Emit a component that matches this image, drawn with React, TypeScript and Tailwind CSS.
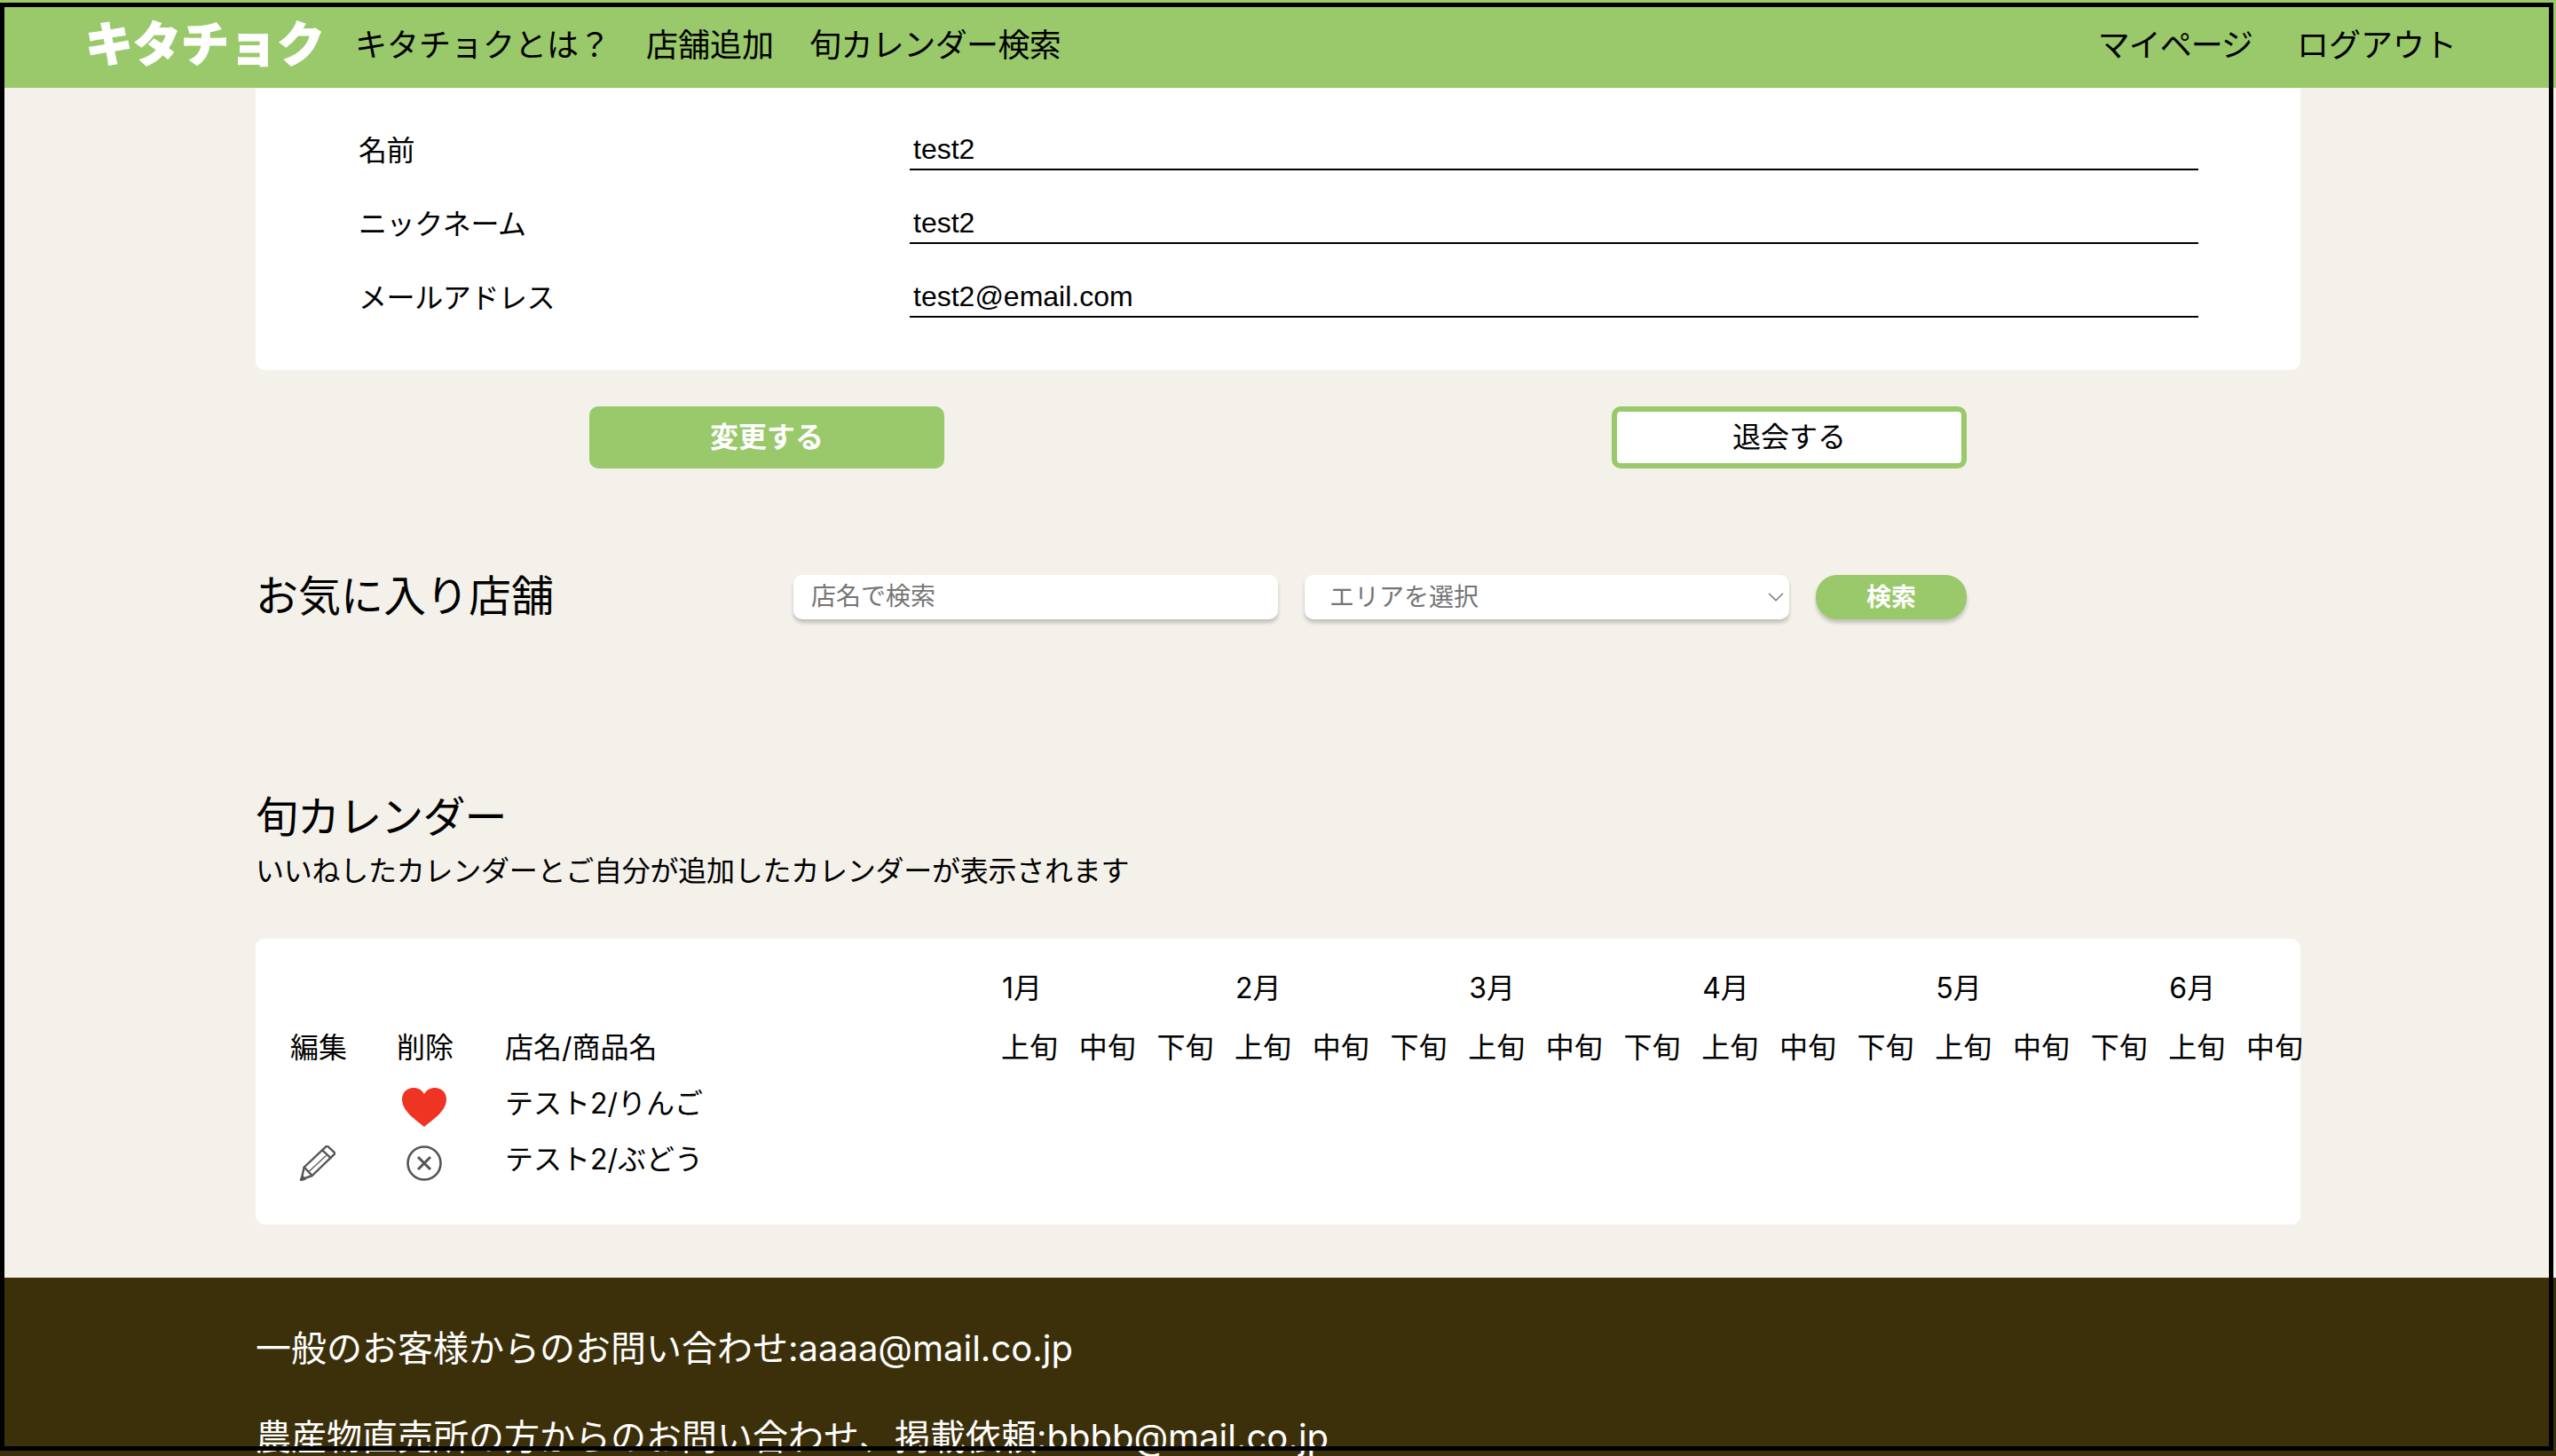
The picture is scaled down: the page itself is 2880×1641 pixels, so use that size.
import { ChevronDown } from "lucide-react";

const FONT = "font-['Inter','Noto_Sans_CJK_JP',sans-serif]";
const months = ["1月", "2月", "3月", "4月", "5月", "6月"];
const terms = ["上旬", "中旬", "下旬"];
// the 6月 下旬 column falls past the right edge of the card
const termCells = months.flatMap((m) => terms.map((t) => m + t)).slice(0, 17);

function Field({ label, value }: { label: string; value: string }) {
  return (
    <div className="flex h-[83px] items-end">
      <label className="w-[621px] leading-[44px] tracking-[-0.4px]">{label}</label>
      <input
        readOnly
        value={value}
        className="h-[48px] w-[1452px] border-b-2 border-black px-1 pt-[1px] font-['Liberation_Sans',sans-serif] text-black outline-none"
      />
    </div>
  );
}

function PencilIcon() {
  return (
    <svg viewBox="0 0 40 40" className="h-10 w-10" fill="none" stroke="#555" strokeWidth="2.4" strokeLinejoin="round" strokeLinecap="round">
      <path d="M29.5 1.2a1.5 1.500 0 0 1 2 0l7.200 6.600a1.500 1.500 0 0 1 0 2.100L13.700 34 1.600 38.400 4.700 24.500z" />
      <path d="M25 5.200l9.600 9" />
      <path d="M4.700 24.500l9 9.500" />
      <path d="M10.500 29l18.700-17.300" strokeWidth="1.2" />
      <path d="M1 39l4.500-1.200-3-3z" fill="#555" />
    </svg>
  );
}

function RemoveIcon() {
  return (
    <svg viewBox="0 0 40 40" className="h-10 w-10" fill="none" stroke="#555" strokeWidth="2.6">
      <circle cx="20" cy="20" r="18.500" />
      <path d="M13 13l14 14M27 13L13 27" strokeWidth="3" />
    </svg>
  );
}

function HeartIcon() {
  return (
    <svg viewBox="0 0 50 44" className="h-[44px] w-[50px]" fill="#ef3424">
      <path d="M25 44C17 37 0 27 0 13 0 5 6 0 13 0c5 0 9.500 2.500 12 7 2.500-4.500 7-7 12-7 7 0 13 5 13 13 0 14-17 24-25 31z" />
    </svg>
  );
}

function CalendarTable() {
  return (
    <div className="mt-[52px] h-[322px] rounded-[10px] bg-white">
      <div className="grid grid-cols-[120px_122px_559px_repeat(18,87.7px)] pl-[39px] pt-[23px]">
        <div className="col-span-3 h-[66px]" />
        {months.map((m) => (
          <div key={m} className="col-span-3 h-[66px] pl-[1px] leading-[66px]">{m}</div>
        ))}
        <div className="h-[67px] leading-[67px]">編集</div>
        <div className="h-[67px] leading-[67px]">削除</div>
        <div className="h-[67px] leading-[67px]">店名/商品名</div>
        {termCells.map((key) => (
          <div key={key} className="h-[67px] whitespace-nowrap leading-[67px]">{key.slice(2)}</div>
        ))}
        <div className="col-start-1 h-[60px]" />
        <div className="flex h-[60px] items-center pl-[6px] pt-[8px]"><HeartIcon /></div>
        <div className="col-span-2 h-[60px] leading-[60px]">テスト2/りんご</div>
        <div className="col-start-1 flex h-[66px] items-center pl-[11px] pt-[8px]"><PencilIcon /></div>
        <div className="flex h-[66px] items-center pl-[11px] pt-[8px]"><RemoveIcon /></div>
        <div className="col-span-2 h-[66px] leading-[66px]">テスト2/ぶどう</div>
      </div>
    </div>
  );
}

export default function App() {
  return (
    <div className={`relative h-screen overflow-hidden bg-[#f4f1ea] text-[32px] text-black ${FONT}`}>
      <header className="flex h-[99px] items-center justify-between bg-[#99c96a] pl-[96px] pr-[112px] pt-[2px] text-[36px]">
        <nav className="flex items-center">
          <a className="mr-[34px] text-[54px] font-black leading-none text-white [-webkit-text-stroke:1px_white]">キタチョク</a>
          <div className="flex gap-[40px]">
            <a>キタチョクとは？</a>
            <a>店舗追加</a>
            <a className="tracking-[-0.6px]">旬カレンダー検索</a>
          </div>
        </nav>
        <nav className="flex gap-[50px]">
          <a className="tracking-[-1px]">マイページ</a>
          <a>ログアウト</a>
        </nav>
      </header>

      <main className="mx-auto w-[2304px]">
        <section className="h-[318px] rounded-b-[10px] bg-white pl-[116px] pt-[10px]">
          <Field label="名前" value="test2" />
          <Field label="ニックネーム" value="test2" />
          <Field label="メールアドレス" value="test2@email.com" />
        </section>

        <div className="ml-[376px] mt-[41px] flex w-[1552px] justify-between">
          <button className="h-[70px] w-[400px] rounded-[10px] bg-[#99c96a] font-bold text-white">変更する</button>
          <button className="h-[70px] w-[400px] rounded-[10px] border-[6px] border-[#99c96a] bg-white">退会する</button>
        </div>

        <div className="mt-[120px] flex h-[50px] items-center">
          <h2 className="w-[606px] pb-[2px] text-[48px] leading-none">お気に入り店舗</h2>
          <input
            placeholder="店名で検索"
            className="h-[50px] w-[546px] rounded-[10px] bg-white px-5 pb-[2px] text-[28px] shadow-[0_4px_4px_rgba(0,0,0,0.2)] outline-none placeholder:text-[#757575]"
          />
          <div className="relative ml-[30px] h-[50px] w-[546px] rounded-[10px] bg-white pl-7 text-[28px] leading-[50px] text-[#757575] shadow-[0_4px_4px_rgba(0,0,0,0.2)]">
            エリアを選択
            <ChevronDown className="absolute right-0 top-[10px] h-[30px] w-[30px] text-[#777777]" strokeWidth={1.2} />
          </div>
          <button className="ml-[30px] h-[50px] w-[170px] rounded-[24px] bg-[#99c96a] text-[28px] font-bold text-white shadow-[0_4px_4px_rgba(0,0,0,0.2)]">検索</button>
        </div>

        <h2 className="mt-[187px] text-[48px] leading-[72px] tracking-[-0.9px]">旬カレンダー</h2>
        <p className="mt-[1px] leading-[48px] tracking-[-0.25px]">いいねしたカレンダーとご自分が追加したカレンダーが表示されます</p>

        <CalendarTable />
      </main>

      <footer className="mt-[60px] h-[400px] bg-[#3c300a] pt-[50px] text-[40px] text-white">
        <div className="mx-auto w-[2304px]">
          <p className="leading-[60px]">一般のお客様からのお問い合わせ:aaaa@mail.co.jp</p>
          <p className="mt-[40px] leading-[60px]">農産物直売所の方からのお問い合わせ、掲載依頼:bbbb@mail.co.jp</p>
        </div>
      </footer>

      {/* capture frame drawn over the page */}
      <div className="pointer-events-none absolute left-0 top-[3px] h-[1632px] w-[2877px] border-[5px] border-black" />
    </div>
  );
}
